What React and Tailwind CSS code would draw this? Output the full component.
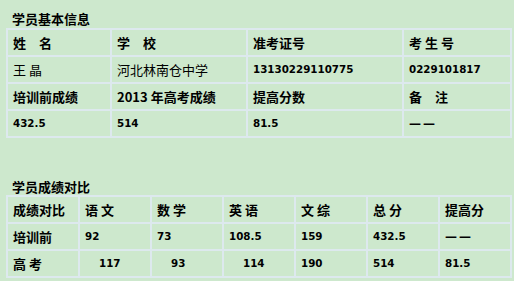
const info = [
  [
    { t: "姓\u2003名", b: true },
    { t: "学\u2003校", b: true },
    { t: "准考证号", b: true },
    { t: "考 生 号", b: true },
  ],
  [
    { t: "王 晶" },
    { t: "河北林南仓中学" },
    { t: "13130229110775", b: true },
    { t: "0229101817", b: true },
  ],
  [
    { t: "培训前成绩", b: true },
    { t: "2013 年高考成绩", b: true },
    { t: "提高分数", b: true },
    { t: "备\u2003注", b: true },
  ],
  [
    { t: "432.5", b: true },
    { t: "514", b: true },
    { t: "81.5", b: true },
    { t: "——", b: true },
  ],
];

const compare = [
  ["成绩对比", "语 文", "数 学", "英 语", "文 综", "总 分", "提高分"],
  ["培训前", "92", "73", "108.5", "159", "432.5", "——"],
  ["高 考", "117", "93", "114", "190", "514", "81.5"],
];

const cjk = "font-['Noto_Sans_CJK_SC',sans-serif]";
const num = "font-['DejaVu_Sans','Noto_Sans_CJK_SC',sans-serif] text-[10.3px]";
const dash = "font-['DejaVu_Sans',sans-serif] text-[12px] tracking-[2px]";
const cell = "border-2 border-[#dde9ee] px-[5px] h-[27px] leading-none text-black whitespace-nowrap";

function style(c) {
  if (c === "——") return dash;
  if (/^[0-9.]+$/.test(c)) return num;
  return "text-[13px]";
}

export default function App() {
  return (
    <div className={`w-[514px] h-[281px] overflow-hidden bg-[#cde8cd] ${cjk}`}>
      <div className="ml-[12px] pt-[12px] h-[28px] text-[13px] font-bold leading-none">学员基本信息</div>
      <table className="ml-[6px] w-[504px] table-fixed border-collapse">
        <colgroup>
          <col className="w-[104px]" />
          <col className="w-[136px]" />
          <col className="w-[156px]" />
          <col className="w-[108px]" />
        </colgroup>
        <tbody>
          {info.map((row, i) => (
            <tr key={i}>
              {row.map((c, j) => (
                <td key={j} className={`${cell} ${c.b ? "font-bold" : "font-normal"} ${style(c.t)}`}>
                  {c.t}
                </td>
              ))}
            </tr>
          ))}
        </tbody>
      </table>

      <div className="ml-[12px] pt-[42px] h-[57px] text-[13px] font-bold leading-none">学员成绩对比</div>
      <table className="ml-[6px] w-[504px] table-fixed border-collapse">
        <tbody>
          {compare.map((row, i) => (
            <tr key={i}>
              {row.map((c, j) => {
                const indent = i === 2 && j >= 1 && j <= 3 ? "pl-[19px]" : "";
                return (
                  <td key={j} className={`${cell} w-[72px] font-bold ${style(c)} ${indent}`}>
                    {c}
                  </td>
                );
              })}
            </tr>
          ))}
        </tbody>
      </table>
    </div>
  );
}
